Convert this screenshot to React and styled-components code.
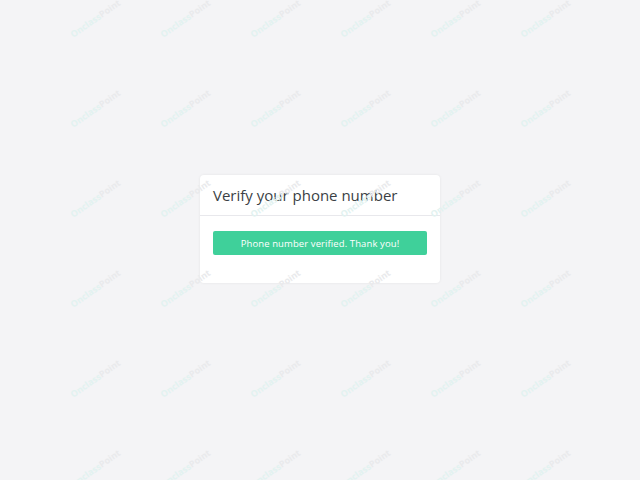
import React from 'react';
import styled, { createGlobalStyle } from 'styled-components';

const GlobalStyle = createGlobalStyle`
  html, body {
    margin: 0;
    padding: 0;
    background: #f4f4f6;
    font-family: "Open Sans", "Liberation Sans", sans-serif;
  }
`;

const Page = styled.div`
  position: relative;
  min-height: 480px;
  display: flex;
  justify-content: center;
  align-items: flex-start;
  padding-top: 175px;
  box-sizing: border-box;
  overflow: hidden;
`;

const Card = styled.div`
  width: 240px;
  background: #ffffff;
  border-radius: 4px;
  box-shadow: 0 0 3px rgba(0, 0, 0, 0.07);
`;

const CardHeader = styled.div`
  height: 41px;
  padding: 0 13px;
  display: flex;
  align-items: center;
  border-bottom: 1px solid #e8e8ec;
  box-sizing: border-box;
`;

const Title = styled.h1`
  margin: 0;
  font-size: 15px;
  font-weight: 400;
  color: #3b3f45;
`;

const CardBody = styled.div`
  padding: 15px 13px 28px;
`;

const Notice = styled.div`
  height: 24px;
  border-radius: 2px;
  background: #3fd09a;
  color: #ffffff;
  font-size: 9.5px;
  letter-spacing: 0.1px;
  display: flex;
  align-items: center;
  justify-content: center;
`;

const Watermarks = styled.div`
  position: absolute;
  inset: 0;
  pointer-events: none;
  display: grid;
  grid-template-columns: repeat(6, 90px);
  grid-auto-rows: 90px;
  padding-left: 50px;
  margin-top: -27px;
`;

const Mark = styled.div`
  display: flex;
  align-items: center;
  justify-content: center;
  transform: rotate(-35deg);
  font-size: 9px;
  font-weight: 700;
  white-space: nowrap;
`;

const MarkPart = styled.span`
  color: ${(p) => (p.$accent ? '#e9eaec' : '#e2f2f0')};
`;

function App() {
  const marks = Array.from({ length: 36 });
  return (
    <Page>
      <GlobalStyle />
      <Card>
        <CardHeader>
          <Title>Verify your phone number</Title>
        </CardHeader>
        <CardBody>
          <Notice>Phone number verified. Thank you!</Notice>
        </CardBody>
      </Card>
      <Watermarks>
        {marks.map((_, i) => (
          <Mark key={i}>
            <MarkPart>Onclass</MarkPart>
            <MarkPart $accent>Point</MarkPart>
          </Mark>
        ))}
      </Watermarks>
    </Page>
  );
}

export default App;
